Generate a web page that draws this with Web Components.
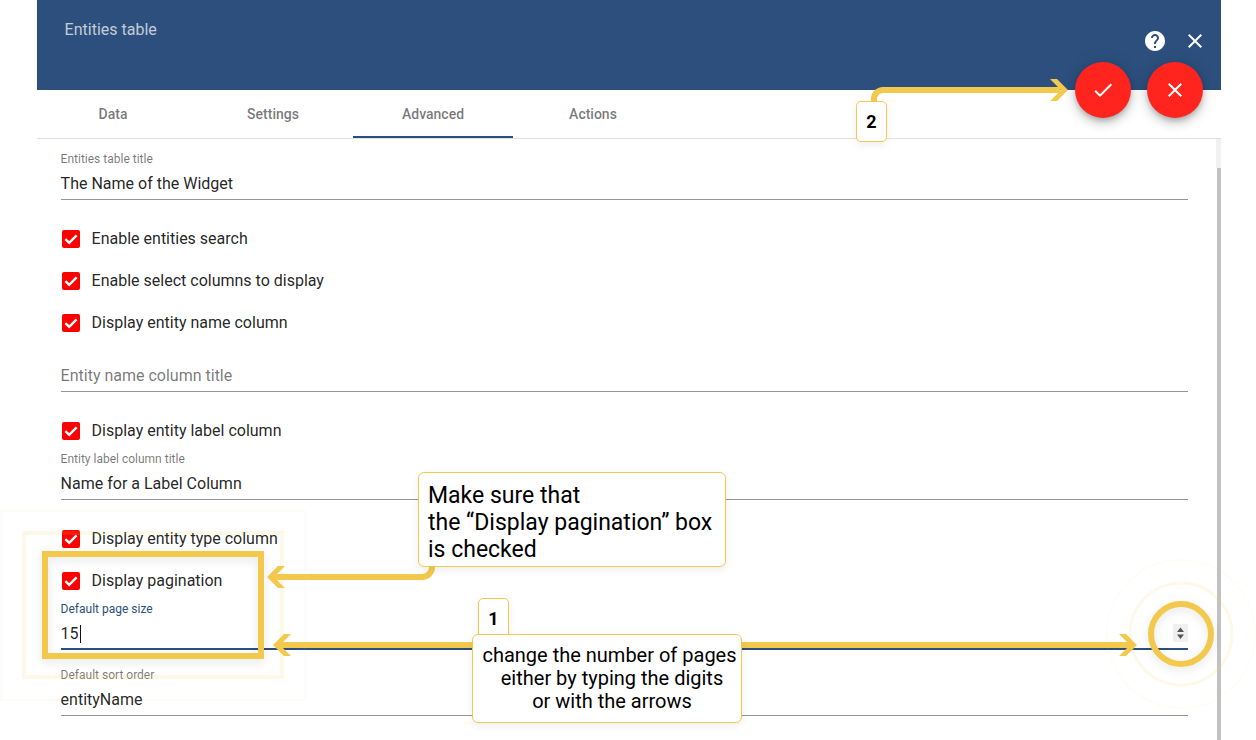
<!DOCTYPE html>
<html>
<head>
<meta charset="utf-8">
<title>Entities table</title>
<style>
  html, body { margin: 0; height: 740px; overflow: hidden; background: #fff; font-family: Roboto, "Liberation Sans", sans-serif; }
</style>
</head>
<body>
<widget-dialog>
  <span slot="title">Entities table</span>
  <dialog-tab>Data</dialog-tab>
  <dialog-tab>Settings</dialog-tab>
  <dialog-tab active>Advanced</dialog-tab>
  <dialog-tab>Actions</dialog-tab>

  <form-group slot="form">
    <form-field label="Entities table title">The Name of the Widget</form-field>
  </form-group>
  <form-group slot="form">
    <check-row>Enable entities search</check-row>
    <check-row>Enable select columns to display</check-row>
    <check-row>Display entity name column</check-row>
    <form-field placeholder>Entity name column title</form-field>
  </form-group>
  <form-group slot="form">
    <check-row>Display entity label column</check-row>
    <form-field label="Entity label column title">Name for a Label Column</form-field>
  </form-group>
  <form-group slot="form">
    <check-row>Display entity type column</check-row>
    <check-row>Display pagination</check-row>
    <form-field label="Default page size" focused>15<number-spin slot="suffix"></number-spin></form-field>
  </form-group>
  <form-group slot="form">
    <form-field label="Default sort order">entityName</form-field>
  </form-group>
</widget-dialog>

<guide-layer>
  <guide-badge style="left:478px;top:598px">1</guide-badge>
  <guide-badge style="left:856px;top:101px">2</guide-badge>
  <guide-note style="left:418px;top:472px;width:308px;height:95px;padding:9px 0 0 9px;font-size:23px;line-height:27px;">Make sure that<br>the “Display pagination” box<br>is checked</guide-note>
  <guide-note style="left:472px;top:634px;width:270px;height:89px;padding:9px 0 0 10px;font-size:20px;line-height:23px;text-align:center;"><span style="margin-left:-5px">change the number of pages</span><br>either by typing the digits<br>or with the arrows</guide-note>
</guide-layer>

<script>
const ICONS = {
  help: 'M12 2C6.48 2 2 6.48 2 12s4.48 10 10 10 10-4.48 10-10S17.52 2 12 2zm1 17h-2v-2h2v2zm2.07-7.75l-.9.92C13.45 12.9 13 13.5 13 15h-2v-.5c0-1.1.45-2.1 1.17-2.83l1.24-1.26c.37-.36.59-.86.59-1.41 0-1.1-.9-2-2-2s-2 .9-2 2H8c0-2.21 1.79-4 4-4s4 1.79 4 4c0 .88-.36 1.68-.93 2.25z',
  close: 'M19 6.41L17.59 5 12 10.59 6.41 5 5 6.41 10.59 12 5 17.59 6.41 19 12 13.41 17.59 19 19 17.59 13.41 12z',
  check: 'M9 16.17L4.83 12l-1.42 1.41L9 19 21 7l-1.41-1.41z'
};

function icon(name) {
  return `<svg width="24" height="24" viewBox="0 0 24 24" fill="#fff"><path d="${ICONS[name]}"/></svg>`;
}

class WidgetDialog extends HTMLElement {
  constructor() {
    super();
    this.attachShadow({mode: "open"});
  }

  connectedCallback() {
    this.shadowRoot.innerHTML = `
    <style>
      :host { display: flex; flex-direction: column; position: relative; box-sizing: border-box; width: 1184px; height: 740px; margin-left: 37px; background: #fff; }
      header { display: flex; justify-content: space-between; align-items: flex-start; height: 90px; flex: none; background: #2c4f7d; color: rgba(255,255,255,.72); font-size: 16px; line-height: 24px; padding: 18px 14px 0 27.6px; box-sizing: border-box; }
      .tools { display: flex; gap: 16px; margin-top: 11px; }
      .tools svg { display: block; }
      .fabs { position: absolute; top: 62px; right: 18px; display: flex; gap: 16px; }
      nav { display: flex; flex: none; height: 48px; padding-left: 0; border-bottom: 1px solid #e0e0e0; }
      nav slot { display: flex; margin-left: -4px; }
      .body { display: flex; flex: 1; min-height: 0; }
      .form { flex: 1; min-width: 0; display: flex; flex-direction: column; gap: 17px; padding: 12px 28px 0 24px; overflow: hidden; }
      .track { flex: none; width: 5px; position: relative; background: linear-gradient(#f1f1f1 0 29px, #fdfdfd 29px); }
      .thumb { position: absolute; left: 1px; right: 0; top: 29px; bottom: 0; background: #c1c1c1; }
    </style>
    <header>
      <slot name="title"></slot>
      <div class="tools">${icon("help")}${icon("close")}</div>
    </header>
    <div class="fabs">
      <round-button>${icon("check")}</round-button>
      <round-button>${icon("close")}</round-button>
    </div>
    <nav><slot></slot></nav>
    <div class="body">
      <div class="form"><slot name="form"></slot></div>
      <div class="track"><div class="thumb"></div></div>
    </div>`;
  }
}

class DialogTab extends HTMLElement {
  constructor() {
    super();
    this.attachShadow({mode: "open"});
    this.shadowRoot.innerHTML = `
    <style>
      :host { display: flex; align-items: center; justify-content: center; box-sizing: border-box; width: 160px; height: 48px; font-size: 14px; font-weight: 500; color: rgba(0,0,0,.54); }
      :host([active]) { border-bottom: 2px solid #2c4f7d; padding-top: 2px; }
    </style>
    <slot></slot>`;
  }
}

class RoundButton extends HTMLElement {
  constructor() {
    super();
    this.attachShadow({mode: "open"});
    this.shadowRoot.innerHTML = `
    <style>
      :host { display: flex; align-items: center; justify-content: center; width: 56px; height: 56px; border-radius: 50%; background: #ff241e; box-shadow: 0 3px 5px -1px rgba(0,0,0,.2), 0 6px 10px 0 rgba(0,0,0,.14), 0 1px 18px 0 rgba(0,0,0,.12); }
    </style>
    <slot></slot>`;
  }
}

class FormGroup extends HTMLElement {
  constructor() {
    super();
    this.attachShadow({mode: "open"});
    this.shadowRoot.innerHTML = `
    <style>
      :host { display: flex; flex-direction: column; flex: none; }
    </style>
    <slot></slot>`;
  }
}

class FormField extends HTMLElement {
  constructor() {
    super();
    this.attachShadow({mode: "open"});
  }

  connectedCallback() {
    const label = this.getAttribute("label") || "";
    this.shadowRoot.innerHTML = `
    <style>
      :host { display: block; height: 49px; box-sizing: border-box; color: rgba(0,0,0,.87); }
      :host([placeholder]) { color: rgba(0,0,0,.54); }
      .label { font-size: 12px; line-height: 14px; height: 14px; padding-top: 1px; margin-bottom: -1px; color: rgba(0,0,0,.54); margin-left: -0.4px; }
      .row { display: flex; align-items: center; margin-top: 6px; height: 24px; padding-bottom: 4px; border-bottom: 1px solid #949494; font-size: 16px; line-height: 24px; }
      .value { flex: 1; display: flex; align-items: center; position: relative; top: 1px; left: -0.4px; }
      :host([focused]) .label { color: #2c4f7d; }
      :host([focused]) .row { border-bottom: 2px solid #2c4f7d; padding-bottom: 3px; }
      .caret { display: none; width: 1px; height: 18px; margin-left: 1px; background: #111; }
      :host([focused]) .caret { display: block; }
    </style>
    <div class="label">${label}</div>
    <div class="row"><div class="value"><slot></slot><i class="caret"></i></div><slot name="suffix"></slot></div>`;
  }
}

class CheckRow extends HTMLElement {
  constructor() {
    super();
    this.attachShadow({mode: "open"});
    this.shadowRoot.innerHTML = `
    <style>
      :host { display: flex; align-items: center; height: 42px; padding-left: 1px; font-size: 16px; color: rgba(0,0,0,.87); }
      .box { display: flex; width: 18px; height: 18px; border-radius: 2px; background: #f00; margin: 2px 11.6px 0 0; }
    </style>
    <div class="box">
      <svg width="18" height="18" viewBox="0 0 18 18" fill="none" stroke="#fff" stroke-width="2.4"><path d="M3.4 9.2l3.8 3.7 7.4-7.6"/></svg>
    </div>
    <slot></slot>`;
  }
}

class NumberSpin extends HTMLElement {
  constructor() {
    super();
    this.attachShadow({mode: "open"});
    this.shadowRoot.innerHTML = `
    <style>
      :host { display: block; width: 15px; height: 18px; background: #f0f0f0; }
      svg { display: block; }
    </style>
    <svg width="15" height="18" viewBox="0 0 15 18" fill="#555"><path d="M7.5 3.5L11 8H4zM7.5 15L4 10.5h7z"/></svg>`;
  }
}

class GuideLayer extends HTMLElement {
  constructor() {
    super();
    this.attachShadow({mode: "open"});
    const y = "#f3c94d";
    this.shadowRoot.innerHTML = `
    <style>
      :host { display: block; position: absolute; left: 0; top: 0; width: 1256px; height: 740px; pointer-events: none; }
      svg { position: absolute; left: 0; top: 0; }
      .frame { filter: drop-shadow(0 3px 5px rgba(0,0,0,.1)); }
    </style>
    <svg width="1256" height="740" fill="none">
      <g stroke="${y}">
        <rect x="1" y="511" width="304" height="189" stroke-opacity=".05" stroke-width="2"/>
        <rect x="24" y="533" width="258" height="144" stroke-opacity=".13" stroke-width="4"/>
        <circle cx="1181" cy="634" r="74" stroke-opacity=".06" stroke-width="1.5"/>
        <circle cx="1181" cy="634" r="51" stroke-opacity=".13" stroke-width="3"/>
      </g>
      <g class="frame">
        <rect x="45" y="554" width="216" height="102" stroke="${y}" stroke-width="6"/>
        <circle cx="1181" cy="634" r="30" stroke="${y}" stroke-width="6"/>
      </g>
      <path d="M874 104v-5a9 9 0 0 1 9-9h177" stroke="${y}" stroke-width="6"/>
      <path d="M432 560v7a10 10 0 0 1-10 10l-148 0" stroke="${y}" stroke-width="6"/>
      <path d="M280 645H1130" stroke="${y}" stroke-width="6"/>
      <g fill="${y}">
        <path d="M1050 79h7l11 11-11 11h-7l11-11z"/>
        <path d="M267 577l11-11h7l-11 11 11 11h-7z"/>
        <path d="M273 645l11-11h7l-11 11 11 11h-7z"/>
        <path d="M1137 645l-11-11h-7l11 11-11 11h7z"/>
      </g>
    </svg>
    <slot></slot>`;
  }
}

class GuideNote extends HTMLElement {
  constructor() {
    super();
    this.attachShadow({mode: "open"});
    this.shadowRoot.innerHTML = `
    <style>
      :host { display: block; position: absolute; box-sizing: border-box; background: #fff; border: 1px solid #f3c94d; border-radius: 6px; color: #000; white-space: nowrap; box-shadow: 0 3px 8px rgba(0,0,0,.07); }
    </style>
    <slot></slot>`;
  }
}

class GuideBadge extends HTMLElement {
  constructor() {
    super();
    this.attachShadow({mode: "open"});
    this.shadowRoot.innerHTML = `
    <style>
      :host { display: flex; align-items: center; justify-content: center; position: absolute; box-sizing: border-box; width: 31px; height: 41px; background: #fff; border: 1px solid #f3c94d; border-radius: 5px; color: #000; font-size: 18px; font-weight: 700; box-shadow: 0 3px 8px rgba(0,0,0,.07); }
    </style>
    <slot></slot>`;
  }
}

customElements.define("widget-dialog", WidgetDialog);
customElements.define("dialog-tab", DialogTab);
customElements.define("round-button", RoundButton);
customElements.define("form-group", FormGroup);
customElements.define("form-field", FormField);
customElements.define("check-row", CheckRow);
customElements.define("number-spin", NumberSpin);
customElements.define("guide-layer", GuideLayer);
customElements.define("guide-note", GuideNote);
customElements.define("guide-badge", GuideBadge);
</script>
</body>
</html>
